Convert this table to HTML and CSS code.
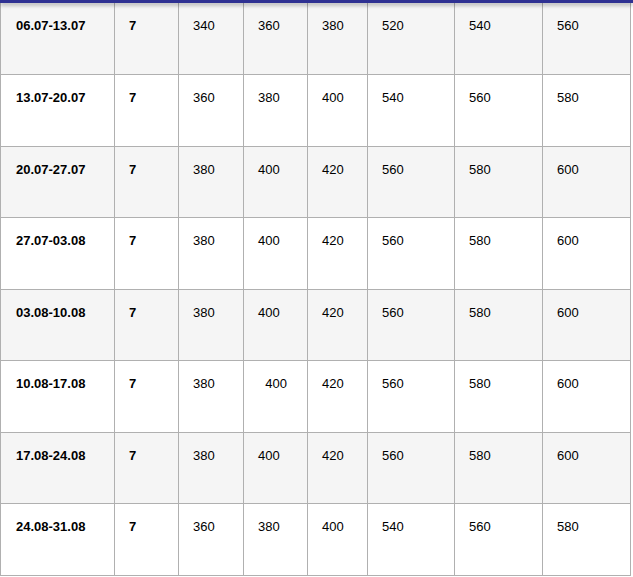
FILE: index.html
```html
<!DOCTYPE html>
<html>
<head>
<meta charset="utf-8">
<link rel="stylesheet" href="styles.css">
</head>
<body>
<div class="topbar"></div>
<table class="prices">
  <colgroup>
    <col class="c1"><col class="c2"><col class="c3"><col class="c4"><col class="c5"><col class="c6"><col class="c7"><col class="c8">
  </colgroup>
  <tbody>
    <tr class="odd"><td class="b">06.07-13.07</td><td class="b">7</td><td>340</td><td>360</td><td>380</td><td>520</td><td>540</td><td>560</td></tr>
    <tr><td class="b">13.07-20.07</td><td class="b">7</td><td>360</td><td>380</td><td>400</td><td>540</td><td>560</td><td>580</td></tr>
    <tr class="odd"><td class="b">20.07-27.07</td><td class="b">7</td><td>380</td><td>400</td><td>420</td><td>560</td><td>580</td><td>600</td></tr>
    <tr><td class="b">27.07-03.08</td><td class="b">7</td><td>380</td><td>400</td><td>420</td><td>560</td><td>580</td><td>600</td></tr>
    <tr class="odd"><td class="b">03.08-10.08</td><td class="b">7</td><td>380</td><td>400</td><td>420</td><td>560</td><td>580</td><td>600</td></tr>
    <tr><td class="b">10.08-17.08</td><td class="b">7</td><td>380</td><td>&nbsp;&nbsp;400</td><td>420</td><td>560</td><td>580</td><td>600</td></tr>
    <tr class="odd"><td class="b">17.08-24.08</td><td class="b">7</td><td>380</td><td>400</td><td>420</td><td>560</td><td>580</td><td>600</td></tr>
    <tr><td class="b">24.08-31.08</td><td class="b">7</td><td>360</td><td>380</td><td>400</td><td>540</td><td>560</td><td>580</td></tr>
  </tbody>
</table>
</body>
</html>
```
FILE: styles.css
```css
html, body {
  margin: 0;
  padding: 0;
  background: #ffffff;
}
body {
  font-family: "Liberation Sans", Arial, sans-serif;
  font-size: 13px;
  color: #000000;
  overflow: hidden;
}
.topbar {
  position: relative;
  z-index: 2;
  height: 3px;
  background: #2f3192;
  box-shadow: 0 2px 4px rgba(0, 0, 0, 0.35);
}
.prices {
  position: relative;
  top: -0.6px;
  border-collapse: collapse;
  table-layout: fixed;
  width: 631px;
}
.c1 { width: 114px; }
.c2 { width: 64px; }
.c3 { width: 65px; }
.c4 { width: 64px; }
.c5 { width: 60px; }
.c6 { width: 87px; }
.c7 { width: 88px; }
.c8 { width: 88px; }
.prices tr {
  height: 71.57px;
}
.prices tr.odd {
  background: #f5f5f5;
}
.prices td {
  border: 1px solid #b0b0b0;
  padding: 15px 14px 0 14px;
  vertical-align: top;
  white-space: nowrap;
  line-height: 15px;
}
.prices td.b {
  font-weight: bold;
}
.prices td:first-child {
  padding-left: 15px;
}
```
